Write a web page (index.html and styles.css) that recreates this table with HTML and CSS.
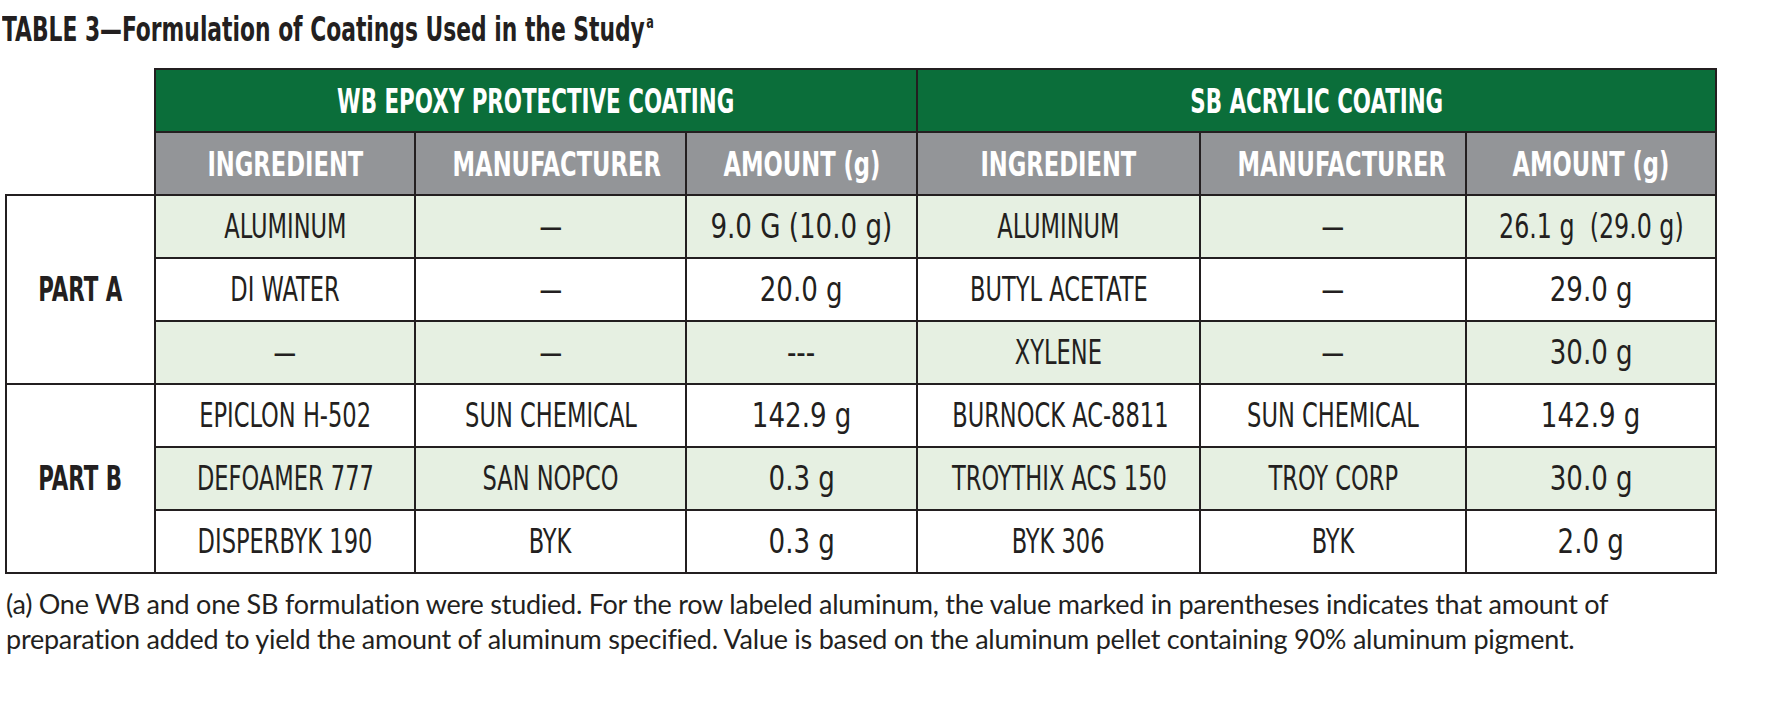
FILE: index.html
```html
<!DOCTYPE html>
<html lang="en">
<head>
<meta charset="utf-8">
<title>Table 3 — Formulation of Coatings Used in the Study</title>
<link rel="stylesheet" href="styles.css">
</head>
<body>
<div class="page">
  <h1 class="title"><span class="title-text">TABLE 3—Formulation of Coatings Used in the Study<sup class="note-mark">a</sup></span></h1>
  <table class="formula">
    <colgroup>
      <col class="c-part">
      <col class="c-ing1">
      <col class="c-man1">
      <col class="c-amt1">
      <col class="c-ing2">
      <col class="c-man2">
      <col class="c-amt2">
    </colgroup>
    <thead>
      <tr class="group-row">
        <th class="blank"></th>
        <th class="group" colspan="3"><span class="t">WB EPOXY PROTECTIVE COATING</span></th>
        <th class="group" colspan="3"><span class="t">SB ACRYLIC COATING</span></th>
      </tr>
      <tr class="head-row">
        <th class="blank"></th>
        <th class="head"><span class="t">INGREDIENT</span></th>
        <th class="head"><span class="t">MANUFACTURER</span></th>
        <th class="head"><span class="t">AMOUNT (g)</span></th>
        <th class="head"><span class="t">INGREDIENT</span></th>
        <th class="head"><span class="t">MANUFACTURER</span></th>
        <th class="head"><span class="t">AMOUNT (g)</span></th>
      </tr>
    </thead>
    <tbody>
      <tr class="shade">
        <th class="part" rowspan="3"><span class="t">PART A</span></th>
        <td><span class="t">ALUMINUM</span></td>
        <td><span class="t">—</span></td>
        <td class="amt"><span class="t">9.0 G (10.0 g)</span></td>
        <td><span class="t">ALUMINUM</span></td>
        <td><span class="t">—</span></td>
        <td class="amt"><span class="t tight">26.1 g&nbsp; (29.0 g)</span></td>
      </tr>
      <tr>
        <td><span class="t">DI WATER</span></td>
        <td><span class="t">—</span></td>
        <td class="amt"><span class="t">20.0 g</span></td>
        <td><span class="t">BUTYL ACETATE</span></td>
        <td><span class="t">—</span></td>
        <td class="amt"><span class="t">29.0 g</span></td>
      </tr>
      <tr class="shade">
        <td><span class="t">—</span></td>
        <td><span class="t">—</span></td>
        <td class="amt"><span class="t">---</span></td>
        <td><span class="t">XYLENE</span></td>
        <td><span class="t">—</span></td>
        <td class="amt"><span class="t">30.0 g</span></td>
      </tr>
      <tr>
        <th class="part" rowspan="3"><span class="t">PART B</span></th>
        <td><span class="t">EPICLON H-502</span></td>
        <td><span class="t">SUN CHEMICAL</span></td>
        <td class="amt"><span class="t">142.9 g</span></td>
        <td><span class="t">BURNOCK AC-8811</span></td>
        <td><span class="t">SUN CHEMICAL</span></td>
        <td class="amt"><span class="t">142.9 g</span></td>
      </tr>
      <tr class="shade">
        <td><span class="t">DEFOAMER 777</span></td>
        <td><span class="t">SAN NOPCO</span></td>
        <td class="amt"><span class="t">0.3 g</span></td>
        <td><span class="t">TROYTHIX ACS 150</span></td>
        <td><span class="t">TROY CORP</span></td>
        <td class="amt"><span class="t">30.0 g</span></td>
      </tr>
      <tr>
        <td><span class="t">DISPERBYK 190</span></td>
        <td><span class="t">BYK</span></td>
        <td class="amt"><span class="t">0.3 g</span></td>
        <td><span class="t">BYK 306</span></td>
        <td><span class="t">BYK</span></td>
        <td class="amt"><span class="t">2.0 g</span></td>
      </tr>
    </tbody>
  </table>
  <p class="footnote">(a) One WB and one SB formulation were studied. For the row labeled aluminum, the value marked in parentheses indicates that amount of<br>preparation added to yield the amount of aluminum specified. Value is based on the aluminum pellet containing 90% aluminum pigment.</p>
</div>
</body>
</html>
```
FILE: styles.css
```css
html, body {
  margin: 0;
  padding: 0;
  background: #ffffff;
}

.page {
  padding: 12px 0 0 2px;
  color: #231f20;
  font-family: "DejaVu Sans Condensed", "DejaVu Sans", sans-serif;
}

.title {
  margin: 0;
  height: 36px;
  font-size: 33px;
  line-height: 36px;
  font-weight: 700;
  white-space: nowrap;
}

.title-text {
  display: inline-block;
  transform: scaleX(0.735);
  transform-origin: left center;
}

.note-mark {
  font-size: 17px;
  vertical-align: 13px;
  line-height: 0;
  margin-left: 2px;
}

.formula {
  margin: 20px 0 0 3px;
  border-collapse: collapse;
  table-layout: fixed;
  width: 1712px;
}

.c-part { width: 149px; }
.c-ing1 { width: 260px; }
.c-man1 { width: 271px; }
.c-amt1 { width: 231px; }
.c-ing2 { width: 283px; }
.c-man2 { width: 266px; }
.c-amt2 { width: 250px; }

.formula tr {
  height: 63px;
}

.formula th,
.formula td {
  padding: 0;
  text-align: center;
  vertical-align: middle;
  border: 2px solid #231f20;
  font-size: 33px;
  line-height: 34px;
  white-space: nowrap;
  overflow: visible;
}

.formula td {
  font-weight: 400;
}

.t {
  display: inline-block;
  transform: scaleX(0.76);
}

.formula td.amt .t {
  transform: scaleX(0.88);
}

.formula td.amt .t.tight {
  transform: scaleX(0.8);
}

.formula .blank {
  border: none;
  background: #ffffff;
}

.formula .group {
  background: #0b6e3a;
  color: #ffffff;
  font-size: 34px;
  font-weight: 700;
}

.formula .group .t {
  transform: scaleX(0.7);
}

.formula .head {
  background: #939598;
  color: #ffffff;
  font-size: 34px;
  font-weight: 700;
}

.formula .head .t {
  transform: scaleX(0.74);
}

.formula .part {
  background: #ffffff;
  font-size: 33px;
  font-weight: 700;
}

.formula .part .t {
  transform: scaleX(0.72);
}

.formula .shade td {
  background: #e6f0e2;
}

.footnote {
  margin: 12px 0 0 4px;
  font-family: Lato, "DejaVu Sans", sans-serif;
  font-size: 27px;
  line-height: 35px;
  letter-spacing: -0.25px;
  white-space: nowrap;
}
```
